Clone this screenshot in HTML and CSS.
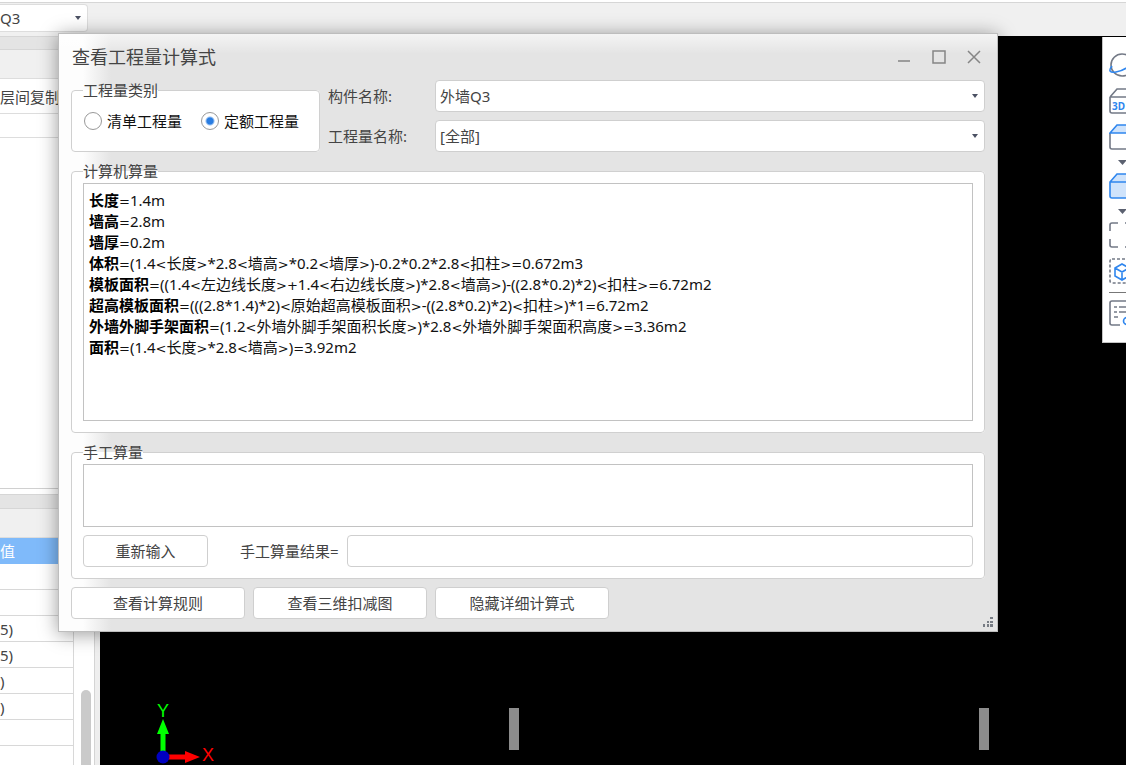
FILE: index.html
```html
<!DOCTYPE html>
<html lang="zh-CN">
<head>
<meta charset="utf-8">
<title>查看工程量计算式</title>
<link rel="stylesheet" href="styles.css">
</head>
<body>
<div class="app">
  <header class="app-bar">
    <div class="combo bar-combo">
      <select aria-label="构件"><option>Q3</option></select>
    </div>
  </header>
  <div class="workspace">
    <aside class="side">
      <div class="band"></div>
      <div class="panel-head"></div>
      <div class="tool-row"><button class="link-button" type="button">层间复制</button></div>
      <div class="search-row"></div>
      <div class="tree"></div>
      <div class="band band-lower"></div>
      <div class="panel-head"></div>
      <div class="props">
        <table class="prop-table">
          <thead><tr><th>值</th></tr></thead>
          <tbody>
            <tr><td></td></tr>
            <tr><td></td></tr>
            <tr><td>5)</td></tr>
            <tr><td>5)</td></tr>
            <tr><td>)</td></tr>
            <tr><td>)</td></tr>
            <tr><td></td></tr>
            <tr><td></td></tr>
          </tbody>
        </table>
        <div class="scroll"><div class="thumb"></div></div>
      </div>
    </aside>
    <main class="viewport">
      <svg class="axis" width="76" height="70" viewBox="0 0 76 70">
        <path d="M10.500 62V39H7L13 24L19 39H15.500V62z" fill="#00ff00"/>
        <path d="M13 59.500H35V56L50 62L35 68V64.500H13z" fill="#ff0000"/>
        <circle cx="13" cy="62" r="6.500" fill="#0000c0"/>
        <text x="13" y="22" text-anchor="middle" class="axis-y">Y</text>
        <text x="58" y="66" text-anchor="middle" class="axis-x">X</text>
      </svg>
      <div class="column column-a"></div>
      <div class="column column-b"></div>
    </main>
  </div>

  <nav class="view-tools" aria-label="视图">
    <button type="button" aria-label="旋转"><svg width="26" height="26" viewBox="0 0 26 26"><circle cx="13" cy="13" r="11" class="g"/><path class="b" d="M3 14C-1 19 1 21 7 20C13 19 20 15 24 10"/></svg></button>
    <button type="button" aria-label="三维"><svg width="26" height="26" viewBox="0 0 26 26"><path class="g" d="M1 9L8 1H26M1 9H26M1 9V23Q1 25 3 25H26"/><text x="3" y="22" class="d3">3D</text></svg></button>
    <button type="button" aria-label="俯视"><svg width="26" height="26" viewBox="0 0 26 26"><path class="g" d="M1 9V23Q1 25 3 25H26"/><path class="b f" d="M1 9L8 1H28V9z"/></svg></button>
    <button type="button" class="more" aria-label="更多视角"><svg width="26" height="6" viewBox="0 0 26 6"><path d="M9 0H18L13.500 5z" fill="#5b6170"/></svg></button>
    <button type="button" aria-label="实体"><svg width="26" height="26" viewBox="0 0 26 26"><path class="b f" d="M1 9L8 1H28V25H3Q1 25 1 23zM1 9H28"/></svg></button>
    <button type="button" class="more" aria-label="更多样式"><svg width="26" height="6" viewBox="0 0 26 6"><path d="M9 0H18L13.500 5z" fill="#5b6170"/></svg></button>
    <button type="button" aria-label="全屏"><svg width="26" height="26" viewBox="0 0 26 26"><path class="g" d="M9 1H3Q1 1 1 3V9M1 17V23Q1 25 3 25H9M16 1H24M16 25H24"/></svg></button>
    <button type="button" aria-label="局部三维"><svg width="26" height="26" viewBox="0 0 26 26"><rect class="g" x="1" y="1" width="28" height="24" rx="2" stroke-dasharray="3 2"/><path class="b" d="M13 6L20 10V18L13 22L6 18V10zM6 10L13 14L20 10M13 14V22"/></svg></button>
    <hr>
    <button type="button" aria-label="显示设置"><svg width="26" height="26" viewBox="0 0 26 26"><path class="g" d="M26 1H3Q1 1 1 3V23Q1 25 3 25H11M5 7H8M10 7H20M5 12H8M10 12H20M5 17H9"/><circle class="b" cx="18" cy="21" r="3.500"/></svg></button>
  </nav>

  <section class="dialog" role="dialog" aria-labelledby="dlg-title">
    <div class="title-bar">
      <h1 id="dlg-title">查看工程量计算式</h1>
      <div class="window-buttons">
        <button type="button" aria-label="最小化"><svg width="14" height="14" viewBox="0 0 14 14"><path d="M1 11H13"/></svg></button>
        <button type="button" aria-label="最大化"><svg width="14" height="14" viewBox="0 0 14 14"><rect x="1" y="1" width="12" height="12"/></svg></button>
        <button type="button" aria-label="关闭"><svg width="14" height="14" viewBox="0 0 14 14"><path d="M1 1L13 13M13 1L1 13"/></svg></button>
      </div>
    </div>

    <div class="filters">
      <fieldset class="group kind">
        <legend>工程量类别</legend>
        <label><input type="radio" name="kind">清单工程量</label>
        <label><input type="radio" name="kind" checked>定额工程量</label>
      </fieldset>
      <div class="fields">
        <label for="part">构件名称:</label>
        <div class="combo"><select id="part"><option>外墙Q3</option></select></div>
        <label for="qty">工程量名称:</label>
        <div class="combo"><select id="qty"><option>[全部]</option></select></div>
      </div>
    </div>

    <fieldset class="group computed">
      <legend>计算机算量</legend>
      <div class="formulas">
        <p><b>长度</b><i>=</i>1.4m</p>
        <p><b>墙高</b><i>=</i>2.8m</p>
        <p><b>墙厚</b><i>=</i>0.2m</p>
        <p><b>体积</b><i>=</i>(1.4<i>&lt;</i>长度<i>&gt;</i>*2.8<i>&lt;</i>墙高<i>&gt;</i>*0.2<i>&lt;</i>墙厚<i>&gt;</i>)-0.2*0.2*2.8<i>&lt;</i>扣柱<i>&gt;=</i>0.672m3</p>
        <p><b>模板面积</b><i>=</i>((1.4<i>&lt;</i>左边线长度<i>&gt;+</i>1.4<i>&lt;</i>右边线长度<i>&gt;</i>)*2.8<i>&lt;</i>墙高<i>&gt;</i>)-((2.8*0.2)*2)<i>&lt;</i>扣柱<i>&gt;=</i>6.72m2</p>
        <p><b>超高模板面积</b><i>=</i>(((2.8*1.4)*2)<i>&lt;</i>原始超高模板面积<i>&gt;</i>-((2.8*0.2)*2)<i>&lt;</i>扣柱<i>&gt;</i>)*1<i>=</i>6.72m2</p>
        <p><b>外墙外脚手架面积</b><i>=</i>(1.2<i>&lt;</i>外墙外脚手架面积长度<i>&gt;</i>)*2.8<i>&lt;</i>外墙外脚手架面积高度<i>&gt;=</i>3.36m2</p>
        <p><b>面积</b><i>=</i>(1.4<i>&lt;</i>长度<i>&gt;</i>*2.8<i>&lt;</i>墙高<i>&gt;</i>)<i>=</i>3.92m2</p>
      </div>
    </fieldset>

    <fieldset class="group manual">
      <legend>手工算量</legend>
      <textarea aria-label="手工算量"></textarea>
      <div class="manual-row">
        <button type="button" class="btn">重新输入</button>
        <label for="result">手工算量结果=</label>
        <input id="result" type="text">
      </div>
    </fieldset>

    <div class="actions">
      <button type="button" class="btn">查看计算规则</button>
      <button type="button" class="btn">查看三维扣减图</button>
      <button type="button" class="btn">隐藏详细计算式</button>
    </div>
    <svg class="grip" width="10" height="10" viewBox="0 0 10 10"><path d="M7 0h3v2h-3zM4 4h2v2h-2zM7 4h3v2h-3zM0 7h2v3h-2zM4 7h2v3h-2zM7 7h3v3h-3z" fill="#777c84"/></svg>
  </section>
</div>
</body>
</html>
```
FILE: styles.css
```css
* { box-sizing: border-box; }

body {
  margin: 0;
  overflow: hidden;
  font-family: "Noto Sans", "Noto Sans CJK SC", sans-serif;
  font-size: 15px;
  line-height: 20px;
  color: #444;
}

button, input, select, textarea { font: inherit; color: inherit; }

.app {
  position: relative;
  display: flex;
  flex-direction: column;
  height: 100vh;
  background: #f0f0f0;
}

.app-bar {
  height: 36px;
  padding-top: 2px;
  border-top: 2px solid #fff;
  box-shadow: inset 0 1px #d6d6d6;
}

.combo { position: relative; }

.combo select {
  width: 100%;
  height: 32px;
  padding: 0 4px;
  border: 1px solid #cfcfcf;
  border-radius: 4px;
  background: #fff;
  appearance: none;
}

.combo::after {
  content: "";
  position: absolute;
  top: 14px;
  right: 7px;
  border: 3px solid transparent;
  border-top: 4px solid #4b5163;
  border-bottom: 0;
  pointer-events: none;
}

.bar-combo { width: 88px; }

.bar-combo select {
  height: 28px;
  padding: 0;
  border-left: 0;
  border-color: #ddd;
  border-radius: 0 4px 4px 0;
}

.bar-combo::after { top: 12px; }

.workspace { display: flex; flex: 1; min-height: 0; }

.side {
  display: flex;
  flex-direction: column;
  width: 100px;
  border-right: 5px solid #eee;
  background: #fff;
  box-shadow: inset -1px 0 #d4d4d4;
}

.band { height: 14px; border: solid #d6d6d6; border-width: 1px 0; background: #e4e4e4; }
.band-lower { height: 15px; margin-top: 5px; }
.panel-head { height: 29px; border-bottom: 1px solid #ddd; background: #f0f0f0; }
.tool-row { height: 35px; padding-top: 8px; border-bottom: 1px solid #ddd; }
.link-button { padding: 0; border: 0; background: none; white-space: nowrap; }
.search-row { height: 24px; border-bottom: 1px solid #ddd; }
.tree { flex: 1; border-bottom: 1px solid #d0d0d0; }
.props { display: flex; height: 227px; overflow: hidden; }

.prop-table { width: 74px; border-spacing: 0; }

.prop-table th, .prop-table td {
  height: 26px;
  padding: 0;
  border: solid #d8d8d8;
  border-width: 0 1px 1px 0;
  text-align: left;
  font-weight: 400;
}

.prop-table th { border-color: #7fbafa; background: #7fbafa; color: #fff; }

.scroll { flex: 1; padding: 152px 4px 0 7px; }
.thumb { width: 10px; height: 100%; border-radius: 5px 5px 0 0; background: #cacaca; }

.viewport { position: relative; flex: 1; background: #000; }
.axis { position: absolute; left: 50px; bottom: -2px; bottom: 0; }
.axis text { font-size: 18px; font-family: "Liberation Sans", sans-serif; }
.axis-y { fill: #00ff00; }
.axis-x { fill: #ff0000; }

.column {
  position: absolute;
  bottom: 15px;
  width: 10px;
  height: 42px;
  background: #8c8c8c;
}

.column-a { left: 409px; }
.column-b { left: 879px; }

.view-tools {
  position: absolute;
  top: 37px;
  right: 0;
  width: 24px;
  height: 306px;
  padding: 15px 0 0 6px;
  overflow: hidden;
  border: solid #c4c4c4;
  border-width: 0 0 1px 1px;
  background: #fff;
}

.view-tools button {
  display: block;
  height: 26px;
  margin-bottom: 10px;
  padding: 0;
  border: 0;
  background: none;
}

.view-tools svg { display: block; }
.view-tools .more { height: 6px; margin-bottom: 7px; }
.view-tools hr { margin: -2px 0 7px; border: 0; border-top: 1px solid #777; }
.g, .b { fill: none; stroke: #737986; stroke-width: 1.6; }
.b { stroke: #2f86ee; }
.f { fill: #cfe3fb; }
.d3 { font: 700 10px "Noto Sans", sans-serif; fill: #2f86ee; }

.dialog {
  position: absolute;
  top: 33px;
  left: 58px;
  right: 128px;
  padding: 0 12px 12px;
  border: 1px solid #bdbdbd;
  background:
    linear-gradient(to bottom, rgba(255, 255, 255, .6), rgba(255, 255, 255, 0) 20px),
    linear-gradient(to right, #fdfdfd 24px, #e4e4e4 52px);
  box-shadow: 0 2px 18px rgba(0, 0, 0, .4);
}

.title-bar {
  display: flex;
  align-items: center;
  justify-content: space-between;
  height: 46px;
  padding: 0 4px 0 1px;
}

.title-bar h1 { margin: 0; font-size: 18px; font-weight: 400; }
.window-buttons { display: flex; gap: 21px; }
.window-buttons button { padding: 0; border: 0; background: none; line-height: 0; }
.window-buttons svg { fill: none; stroke: #858585; stroke-width: 1.5; }

.filters { display: flex; gap: 8px; }

.group {
  min-width: 0;
  margin: 0;
  padding: 0 11px 11px;
  border: 1px solid #d0d0d0;
  border-radius: 4px;
  background: #fff;
}

.group legend { height: 20px; padding: 0; line-height: 20px; }

.kind { display: flex; gap: 18px; width: 249px; height: 72px; padding-right: 0; white-space: nowrap; color: #111; }
.kind legend { color: #444; }
.kind label { display: flex; align-items: center; gap: 5px; height: 42px; padding-left: 1px; }

.kind input {
  width: 18px;
  height: 18px;
  margin: 0;
  border: 1px solid #999;
  border-radius: 50%;
  background: #fff;
  appearance: none;
}

.kind input:checked { background: radial-gradient(circle, #2a7de1 3px, #fff 5px); }

.fields {
  display: grid;
  flex: 1;
  grid-template-columns: 99px 1fr;
  gap: 8px;
  align-items: center;
  height: 72px;
}

.computed, .manual { margin-top: 9px; }

.formulas {
  height: 238px;
  margin-top: 2px;
  padding: 6px 5px;
  border: 1px solid #c2c2c2;
  line-height: 21px;
  color: #111;
  white-space: nowrap;
}

.formulas p { height: 21px; margin: 0; }
.formulas b { color: #000; }
.formulas i { font: 13px/1 "DejaVu Sans", sans-serif; }

.manual textarea {
  display: block;
  width: 100%;
  height: 63px;
  margin: 2px 0 8px;
  border: 1px solid #c2c2c2;
  resize: none;
}

.manual-row { display: flex; align-items: center; }
.manual-row .btn { width: 125px; margin-right: 32px; }

.manual-row input {
  flex: 1;
  height: 32px;
  margin-left: 8px;
  border: 1px solid #cfcfcf;
  border-radius: 4px;
}

.btn {
  width: 174px;
  height: 32px;
  padding: 0;
  border: 1px solid #cfcfcf;
  border-radius: 4px;
  background: #fff;
}

.actions { display: flex; gap: 8px; margin-top: 8px; }
.grip { position: absolute; right: 4px; bottom: 4px; }
```
